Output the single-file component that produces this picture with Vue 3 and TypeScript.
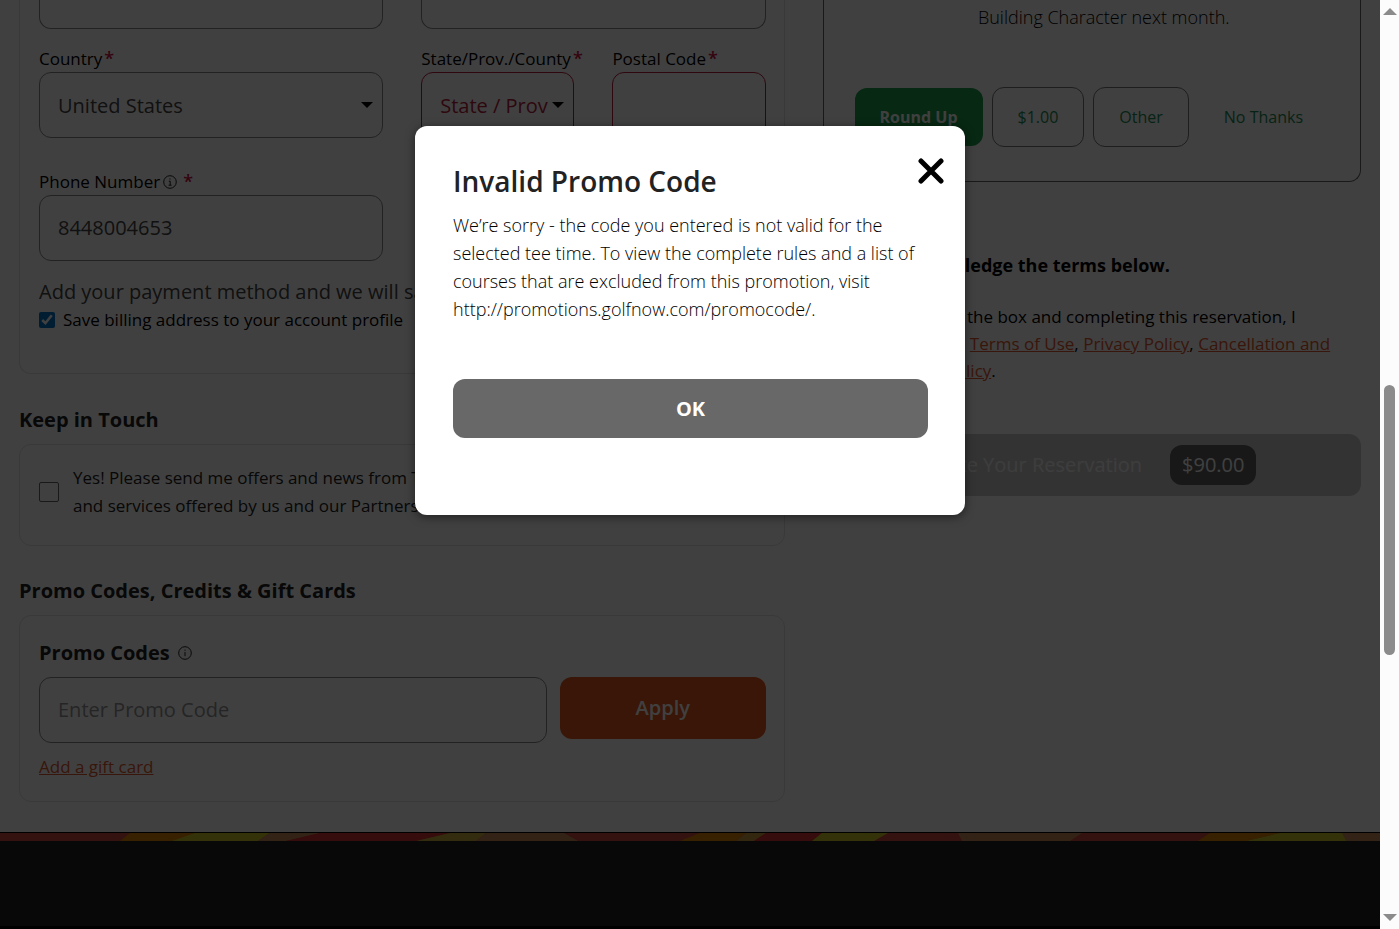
<script setup lang="ts">
import { ref } from 'vue'

const country = ref('us')
const region = ref('')
const postalCode = ref('')
const phone = ref('8448004653')
const saveBilling = ref(true)
const keepInTouch = ref(false)
const agreed = ref(false)
const promoCode = ref('')
const dialogOpen = ref(true)

const closeDialog = () => {
  dialogOpen.value = false
}
</script>

<template>
  <div class="window">
    <div class="page">
      <main class="content">
        <div class="column">
          <section class="card billing">
            <div class="grid-two">
              <input class="field cut" type="text" aria-label="Address" />
              <input class="field cut" type="text" aria-label="City" />
            </div>
            <div class="grid-two row">
              <div>
                <label class="label" for="country">Country<sup class="req">*</sup></label>
                <div class="select-wrap">
                  <select id="country" v-model="country" class="field">
                    <option value="us">United States</option>
                  </select>
                  <svg class="caret" viewBox="0 0 12 6"><path d="M0 0h12L6 6z" /></svg>
                </div>
              </div>
              <div class="grid-two">
                <div>
                  <label class="label" for="region">State/Prov./County<sup class="req">*</sup></label>
                  <div class="select-wrap">
                    <select id="region" v-model="region" class="field invalid">
                      <option value="">State / Prov</option>
                    </select>
                    <svg class="caret" viewBox="0 0 12 6"><path d="M0 0h12L6 6z" /></svg>
                  </div>
                </div>
                <div>
                  <label class="label" for="postal">Postal Code<sup class="req">*</sup></label>
                  <input id="postal" v-model="postalCode" class="field invalid" type="text" />
                </div>
              </div>
            </div>
            <div class="grid-two row phone">
              <div>
                <label class="label" for="phone">
                  <span>Phone Number</span>
                  <svg class="info" viewBox="0 0 14 14">
                    <circle cx="7" cy="7" r="6.3" />
                    <path d="M5.8 6.2h1.4v4M5.6 10.2h3M7 3.4v1.2" />
                  </svg>
                  <sup class="req wide">*</sup>
                </label>
                <input id="phone" v-model="phone" class="field" type="tel" />
              </div>
            </div>
            <p class="payment">Add your payment method and we will save it</p>
            <label class="save">
              <input v-model="saveBilling" class="tick" type="checkbox" />
              <span>Save billing address to your account profile</span>
            </label>
          </section>

          <h2 class="heading touch-heading">Keep in Touch</h2>
          <section class="card touch">
            <label class="touch-label">
              <input v-model="keepInTouch" class="box" type="checkbox" />
              <span>Yes! Please send me offers and news from The Club<br />and services offered by us and our Partners.</span>
            </label>
          </section>

          <h2 class="heading promo-heading">Promo Codes, Credits &amp; Gift Cards</h2>
          <section class="card promo">
            <label class="promo-label" for="promo">
              <span>Promo Codes</span>
              <svg class="info" viewBox="0 0 14 14">
                <circle cx="7" cy="7" r="6.3" />
                <path d="M7 6v4.2M7 3.6v1.2" />
              </svg>
            </label>
            <div class="promo-row">
              <input id="promo" v-model="promoCode" class="field" type="text" placeholder="Enter Promo Code" />
              <button class="apply" type="button">Apply</button>
            </div>
            <a class="gift" href="#gift">Add a gift card</a>
          </section>
        </div>

        <div class="column">
          <section class="charity">
            <p class="charity-text">Building Character next month.</p>
            <div class="choices">
              <button class="choice solid" type="button">Round Up</button>
              <button class="choice" type="button">$1.00</button>
              <button class="choice" type="button">Other</button>
              <button class="choice plain" type="button">No Thanks</button>
            </div>
          </section>

          <p class="terms-title">Please acknowledge the terms below.</p>
          <div class="terms">
            <input id="agree" v-model="agreed" class="box" type="checkbox" />
            <div>
              <label for="agree">By checking the box and completing this reservation, I</label><br />
              agree to the <a href="#terms">Terms of Use</a>, <a href="#privacy">Privacy Policy</a>,
              <a href="#cancel">Cancellation and<br />No-Show Policy</a>.
            </div>
          </div>
          <button class="reserve" type="button">
            <span>Make Your Reservation</span>
            <span class="price">$90.00</span>
          </button>
        </div>
      </main>

      <svg class="stripe" viewBox="0 0 1380 8" preserveAspectRatio="none">
        <path fill="#d0483c" d="M0 0h1380v8H0z" />
        <path fill="#e08400" d="M130 0h80l-34 8h-56z" />
        <path fill="#ccc824" d="M195 0h75l-12 8h-86z" />
        <path fill="#cc8858" d="M270 0h50l-34 8h-28z" />
        <path fill="#d83030" d="M320 0h130l-34 8H286z" />
        <path fill="#ccb03c" d="M450 0h36l-10 8h-60z" />
        <path fill="#cc8c5c" d="M486 0h78l14 8H476z" />
        <path fill="#e08400" d="M700 0h46l-10 8h-56z" />
        <path fill="#cc9c40" d="M746 0h20l-12 8h-18z" />
        <path fill="#d83030" d="M766 0h56l-10 8h-58z" />
        <path fill="#ccc824" d="M822 0h66l-14 8h-62z" />
        <path fill="#cc8858" d="M958 0h124l-12 8H962z" />
        <path fill="#e08400" d="M1210 0h70l-34 8h-48z" />
        <path fill="#ccc824" d="M1280 0h62l14 8h-110z" />
        <path fill="#cc8858" d="M1342 0h38v8h-34z" />
      </svg>
      <footer class="footer"></footer>

      <div v-if="dialogOpen" class="overlay">
        <div class="dialog" role="dialog" aria-labelledby="dialog-title">
          <div class="dialog-head">
            <h1 id="dialog-title">Invalid Promo Code</h1>
            <button class="close" type="button" aria-label="Close" @click="closeDialog">
              <svg viewBox="0 0 26 26"><path d="M3 3l20 20M23 3L3 23" /></svg>
            </button>
          </div>
          <p class="dialog-text">
            We’re sorry - the code you entered is not valid for the selected tee time. To view the
            complete rules and a list of courses that are excluded from this promotion, visit
            http://promotions.golfnow.com/promocode/.
          </p>
          <button class="ok" type="button" @click="closeDialog">OK</button>
        </div>
      </div>
    </div>

    <div class="scrollbar" aria-hidden="true">
      <svg viewBox="0 0 14 7"><path d="M7 0l7 7H0z" /></svg>
      <div class="track"><div class="thumb"></div></div>
      <svg viewBox="0 0 14 7"><path d="M0 0h14L7 7z" /></svg>
    </div>
  </div>
</template>

<style>
body {
  margin: 0;
}
</style>

<style scoped>
.window {
  display: grid;
  grid-template-columns: 1fr 19px;
  min-height: 100vh;
  font-family: 'Open Sans', 'Noto Sans', sans-serif;
  font-size: 18px;
  line-height: 28px;
  color: #000;
}
.window *,
.window *::before {
  box-sizing: border-box;
}
button,
input,
select {
  font: inherit;
  color: inherit;
  margin: 0;
}
p,
h1,
h2 {
  margin: 0;
}
.page {
  position: relative;
  display: flex;
  flex-direction: column;
  background: #fff;
}
.content {
  display: grid;
  grid-template-columns: 767fr 537fr;
  gap: 38px;
  padding: 0 19px 30px;
}
.card {
  border: 1px solid #e2e2e2;
  border-radius: 12px;
  padding: 0 18px 0 19px;
}
.billing {
  border-top: 0;
  border-radius: 0 0 12px 12px;
  padding-bottom: 39px;
}
.grid-two {
  display: grid;
  grid-template-columns: minmax(0, 1fr) minmax(0, 1fr);
  gap: 38px;
}
.row {
  padding-top: 16px;
}
.phone {
  padding-top: 30px;
}
.field {
  display: block;
  width: 100%;
  height: 66px;
  border: 1px solid #888;
  border-radius: 12px;
  padding: 0 18px;
  background: transparent;
  font-size: 20px;
  color: #444;
  appearance: none;
}
input.field {
  padding-bottom: 2px;
}
select.field {
  padding-top: 2px;
}
.field::placeholder {
  color: #949494;
  opacity: 1;
}
.cut {
  height: 29px;
  border-top: 0;
  border-radius: 0 0 12px 12px;
}
.field.invalid {
  border-color: #b81c3c;
  color: #b81c3c;
}
.select-wrap {
  position: relative;
}
select.invalid {
  padding-right: 0;
}
.caret {
  position: absolute;
  right: 10px;
  top: 30px;
  width: 12px;
  height: 6px;
}
.label {
  display: flex;
  align-items: center;
  height: 27px;
  font-size: 17px;
  white-space: nowrap;
}
.req {
  align-self: flex-start;
  margin-left: 2px;
  font-size: 18px;
  font-weight: 600;
  line-height: 26px;
  color: #d01040;
}
.wide {
  margin-left: 6px;
}
.info {
  width: 14px;
  height: 14px;
  margin-left: 3px;
  fill: none;
  stroke: #222;
}
.payment {
  padding-top: 17px;
  font-size: 20px;
  color: #444;
}
.save {
  display: flex;
  align-items: center;
  gap: 8px;
  font-size: 17px;
}
.tick {
  width: 16px;
  height: 16px;
  accent-color: #0075c8;
}
.heading {
  font-size: 20px;
  font-weight: 700;
  color: #222;
}
.touch-heading {
  padding: 32px 0 10px;
}
.touch {
  padding-top: 19px;
  padding-bottom: 25px;
}
.touch-label {
  display: flex;
  align-items: center;
  gap: 14px;
  font-size: 17px;
  color: #222;
  white-space: nowrap;
}
.box {
  flex: none;
  width: 20px;
  height: 20px;
  border: 1px solid #666;
  border-radius: 2px;
  background: transparent;
  appearance: none;
}
.promo-heading {
  padding: 31px 0 10px;
}
.promo {
  padding-top: 23px;
  padding-bottom: 20px;
}
.promo-label {
  display: flex;
  align-items: center;
  height: 38px;
  padding-bottom: 10px;
  gap: 5px;
  font-size: 20px;
  font-weight: 700;
  color: #222;
}
.promo-row {
  display: grid;
  grid-template-columns: 509fr 206fr;
  gap: 13px;
}
.apply {
  height: 62px;
  border: 0;
  border-radius: 12px;
  background: #e4581c;
  color: #fff;
  font-size: 20px;
  font-weight: 600;
}
a {
  color: #e4582c;
}
.gift {
  display: block;
  width: fit-content;
  margin-top: 10px;
  font-size: 17px;
}
.charity {
  border: 1px solid #666;
  border-top: 0;
  border-radius: 0 0 12px 12px;
  padding: 3px 31px 34px;
}
.charity-text {
  padding-left: 24px;
  text-align: center;
  font-weight: 300;
  color: #000;
}
.choices {
  display: flex;
  align-items: center;
  gap: 9px;
  padding-top: 56px;
}
.choice {
  flex: none;
  height: 60px;
  border: 1px solid #777;
  border-radius: 12px;
  padding: 0 25px;
  background: transparent;
  color: #1c8c54;
  font-size: 16px;
  white-space: nowrap;
}
.solid {
  height: 58px;
  border: 0;
  background: #1ca048;
  color: #fff;
  font-weight: 700;
}
.plain {
  border-color: transparent;
}
.terms-title {
  padding: 69px 0 0 10px;
  font-weight: 700;
}
.terms {
  display: flex;
  gap: 17px;
  padding: 24px 0 50px 10px;
  font-size: 17px;
  line-height: 27px;
  white-space: nowrap;
}
.reserve {
  display: flex;
  align-items: center;
  justify-content: center;
  gap: 28px;
  width: 100%;
  height: 62px;
  border: 0;
  border-radius: 12px;
  background: #ccc;
  color: #f4f4f4;
  font-size: 20px;
}
.price {
  border-radius: 12px;
  padding: 6px 12px;
  background: #606060;
  color: #fff;
}
.stripe {
  display: block;
  width: 100%;
  height: 9px;
  border-top: 1px solid #000;
}
.footer {
  flex: 1;
  min-height: 87px;
  border-bottom: 3px solid #000;
  background: #202020;
}
.overlay {
  position: absolute;
  inset: 0;
  padding-top: 126px;
  background: rgba(0, 0, 0, 0.75);
}
.dialog {
  width: 550px;
  max-width: 100%;
  margin: 0 auto;
  padding: 37px 37px 77px 38px;
  border-radius: 12px;
  background: #fff;
  box-shadow: 0 2px 10px rgba(0, 0, 0, 0.5);
  color: #000;
}
.dialog-head {
  display: flex;
  justify-content: space-between;
}
.dialog-head h1 {
  font-size: 28px;
  line-height: 36px;
  font-weight: 600;
  color: #222;
}
.close {
  width: 26px;
  height: 26px;
  margin: -5px -16px 0 0;
  border: 0;
  padding: 0;
  background: transparent;
}
.close svg {
  display: block;
  width: 26px;
  height: 26px;
  fill: none;
  stroke: #000;
  stroke-width: 5;
  stroke-linecap: round;
}
.dialog-text {
  padding: 12px 0 56px;
  font-weight: 300;
}
.ok {
  display: block;
  width: 100%;
  height: 59px;
  border: 0;
  border-radius: 12px;
  background: #686868;
  color: #fff;
  font-size: 20px;
  font-weight: 700;
}
.scrollbar {
  display: flex;
  flex-direction: column;
  align-items: center;
  padding: 8px 0;
  background: #fcfcfc;
}
.scrollbar svg {
  width: 14px;
  height: 7px;
  fill: #8b8b8b;
}
.track {
  display: grid;
  grid-template-rows: 370fr 270fr 259fr;
  flex: 1;
  width: 11px;
}
.thumb {
  grid-row: 2;
  border-radius: 6px;
  background: #8b8b8b;
}
</style>
